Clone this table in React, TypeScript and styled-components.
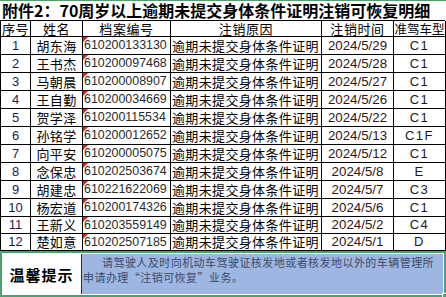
import styled, { createGlobalStyle } from 'styled-components';

const GlobalStyle = createGlobalStyle`
  html, body {
    margin: 0;
    padding: 0;
    background: #ffffff;
  }
  * {
    box-sizing: border-box;
  }
`;

const rows = [
  ['1', '胡东海', '610200133130', '2024/5/29', 'C1'],
  ['2', '王书杰', '610200097468', '2024/5/28', 'C1'],
  ['3', '马朝晨', '610200008907', '2024/5/27', 'C1'],
  ['4', '王自勤', '610200034669', '2024/5/26', 'C1'],
  ['5', '贺学泽', '610200115534', '2024/5/22', 'C1'],
  ['6', '孙铭学', '610200012652', '2024/5/13', 'C1F'],
  ['7', '向平安', '610200005075', '2024/5/12', 'C1'],
  ['8', '念保忠', '610202503674', '2024/5/8', 'E'],
  ['9', '胡建忠', '610221622069', '2024/5/7', 'C3'],
  ['10', '杨宏道', '610200174326', '2024/5/6', 'C1'],
  ['11', '王新义', '610203559149', '2024/5/2', 'C4'],
  ['12', '楚如意', '610202507185', '2024/5/1', 'D'],
];

const CJK = `"Noto Sans CJK SC", sans-serif`;
const LATIN = `"Liberation Sans", Arial, "Noto Sans CJK SC", sans-serif`;

function App() {
  return (
    <>
      <GlobalStyle />
      <Sheet>
        <Title>附件2：70周岁以上逾期未提交身体条件证明注销可恢复明细</Title>
        <Table>
          <Head>序号</Head>
          <Head>姓名</Head>
          <Head>档案编号</Head>
          <Head>注销原因</Head>
          <Head>注销时间</Head>
          <Head $tight>准驾车型</Head>
          {rows.map((r, i) => (
            <Row key={r[0]} $short={i >= 10}>
              <Seq>{r[0]}</Seq>
              <Name>{r[1]}</Name>
              <FileNo>
                <Flag />
                {r[2]}
              </FileNo>
              <Reason>逾期未提交身体条件证明</Reason>
              <DateCell>{r[3]}</DateCell>
              <Licence>{r[4]}</Licence>
            </Row>
          ))}
        </Table>
        <Notice>
          <NoticeLabel>温馨提示</NoticeLabel>
          <NoticeText>
            <p>请驾驶人及时向机动车驾驶证核发地或者核发地以外的车辆管理所</p>
            <p>申请办理“注销可恢复”业务。</p>
          </NoticeText>
          <Handle />
        </Notice>
      </Sheet>
    </>
  );
}

export default App;

const Sheet = styled.div`
  width: 446px;
  height: 297px;
  overflow: hidden;
  display: flex;
  flex-direction: column;
`;

const Title = styled.div`
  height: 20px;
  border-top: 1px solid #4fa06c;
  padding-left: 2px;
  font-family: ${CJK};
  font-weight: 700;
  font-size: 16px;
  line-height: 18px;
  white-space: nowrap;
  color: #000;
`;

const Table = styled.div`
  display: grid;
  grid-template-columns: 30px 52px 88px 151px 72px 52px;
  grid-template-rows: 16px;
  width: 445px;
  border-top: 1px solid #000;
  border-left: 1px solid #000;
`;

const Row = styled.div<{ $short?: boolean }>`
  display: contents;
  & > div {
    height: ${(p) => (p.$short ? 17 : 18)}px;
    line-height: ${(p) => (p.$short ? 16 : 17)}px;
  }
`;

const Cell = styled.div`
  position: relative;
  border-right: 1px solid #000;
  border-bottom: 1px solid #000;
  white-space: nowrap;
  color: #000;
`;

const Head = styled(Cell)<{ $tight?: boolean }>`
  height: 16px;
  font-family: ${CJK};
  font-size: ${(p) => (p.$tight ? 12.5 : 13)}px;
  line-height: 15px;
  letter-spacing: ${(p) => (p.$tight ? 0 : 0.6)}px;
  text-align: center;
`;

const Seq = styled(Cell)`
  font-family: ${LATIN};
  font-size: 13px;
  text-align: center;
  color: #1e1b4e;
`;

const Name = styled(Cell)`
  font-family: ${CJK};
  font-size: 13px;
  letter-spacing: 0.4px;
  text-align: center;
`;

const FileNo = styled(Cell)`
  font-family: ${LATIN};
  font-size: 12.4px;
  padding-left: 1px;
  color: #2a2a2a;
`;

const Flag = styled.span`
  position: absolute;
  left: 0;
  top: 0;
  width: 0;
  height: 0;
  border-top: 5px solid #e0201c;
  border-right: 5px solid transparent;
`;

const Reason = styled(Cell)`
  font-family: ${CJK};
  font-size: 13px;
  letter-spacing: 0.35px;
  padding-left: 1px;
`;

const DateCell = styled(Cell)`
  font-family: ${LATIN};
  font-size: 13.3px;
  text-align: center;
  color: #2e1616;
`;

const Licence = styled(Cell)`
  font-family: ${LATIN};
  font-size: 13px;
  letter-spacing: 1.5px;
  text-align: center;
  color: #1a1a1a;
`;

const Notice = styled.div`
  position: relative;
  flex: 1;
  display: grid;
  grid-template-columns: 80px 1fr;
  border: 2px solid #4fa06c;
  padding: 1px 1px 1px 0;
  background: #fff;
`;

const NoticeLabel = styled.div`
  display: flex;
  align-items: center;
  justify-content: center;
  border-right: 1px solid #1d2a55;
  font-family: ${CJK};
  font-weight: 700;
  font-size: 15px;
  letter-spacing: 1px;
  color: #000;
`;

const NoticeText = styled.div`
  background: #9db7e2;
  padding: 1px 0 0 1px;
  font-family: ${CJK};
  font-size: 11px;
  line-height: 15px;
  letter-spacing: 0.45px;
  color: #3e4a66;
  white-space: nowrap;
  p {
    margin: 0;
  }
  p:first-child {
    text-indent: 19px;
  }
`;

const Handle = styled.span`
  position: absolute;
  right: -3px;
  bottom: -3px;
  width: 5px;
  height: 5px;
  background: #4fa06c;
  border: 1px solid #fff;
`;
